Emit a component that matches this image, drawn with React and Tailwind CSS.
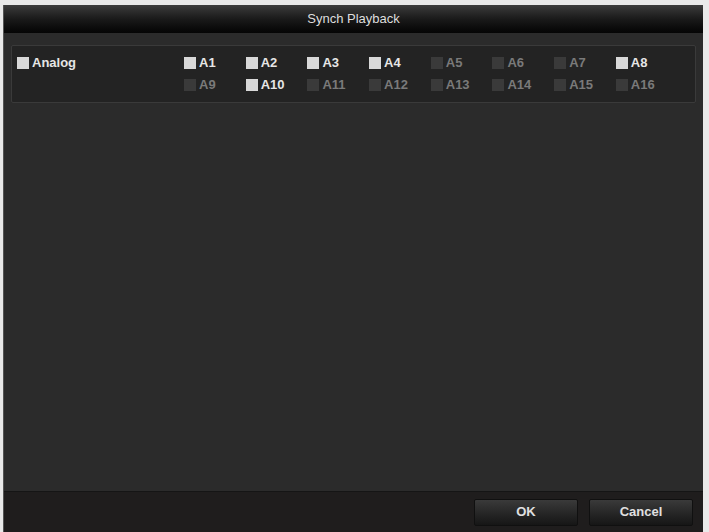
import React from "react";

const channels = [
  { name: "A1", on: true },
  { name: "A2", on: true },
  { name: "A3", on: true },
  { name: "A4", on: true },
  { name: "A5", on: false },
  { name: "A6", on: false },
  { name: "A7", on: false },
  { name: "A8", on: true },
  { name: "A9", on: false },
  { name: "A10", on: true },
  { name: "A11", on: false },
  { name: "A12", on: false },
  { name: "A13", on: false },
  { name: "A14", on: false },
  { name: "A15", on: false },
  { name: "A16", on: false },
];

function Channel({ name, on }) {
  return (
    <div className="flex items-center gap-[3px] h-[14px] leading-[14px]">
      <span
        className={`w-[12px] h-[12px] ${on ? "bg-[#d8d8d8]" : "bg-[#3a3a3a]"}`}
      />
      <span className={on ? "text-[#e6e6e6]" : "text-[#7a7a7a]"}>{name}</span>
    </div>
  );
}

export default function App() {
  return (
    <div className="w-[709px] h-[532px] bg-[#e9e9e9] pt-[5px] pl-[3px] overflow-hidden font-['Liberation_Sans',Arial,sans-serif]">
      <div className="w-[700px] h-[527px] flex flex-col bg-[#2a2a2a] border-l border-[#555]">
        <div className="h-[28px] flex items-center justify-center bg-gradient-to-b from-[#3c3c3c] via-[#1a1a1a] to-[#050505] text-[#dedede] text-[13px]">
          Synch Playback
        </div>
        <div className="flex-1 px-[7px] pt-[12px] bg-[#2b2b2b]">
          <div className="h-[58px] bg-[#232323] border border-[#3a3a3a] rounded-[2px] flex items-start text-[13px] font-bold pt-[10px]">
            <div className="w-[172px] pl-[5px]">
              <Channel name="Analog" on />
            </div>
            <div className="grid grid-cols-[repeat(8,61.7px)] gap-y-[8px]">
              {channels.map((c) => (
                <Channel key={c.name} name={c.name} on={c.on} />
              ))}
            </div>
          </div>
        </div>
        <div className="h-[41px] bg-[#1f1d1d] border-t border-[#151515] flex items-center justify-end gap-[11px] pr-[10px]">
          <button className="w-[104px] h-[27px] rounded-[2px] bg-gradient-to-b from-[#3a3a3a] to-[#161616] border border-[#101010] text-[#e0e0e0] text-[13px] font-bold">
            OK
          </button>
          <button className="w-[104px] h-[27px] rounded-[2px] bg-gradient-to-b from-[#3a3a3a] to-[#161616] border border-[#101010] text-[#e0e0e0] text-[13px] font-bold">
            Cancel
          </button>
        </div>
      </div>
    </div>
  );
}
